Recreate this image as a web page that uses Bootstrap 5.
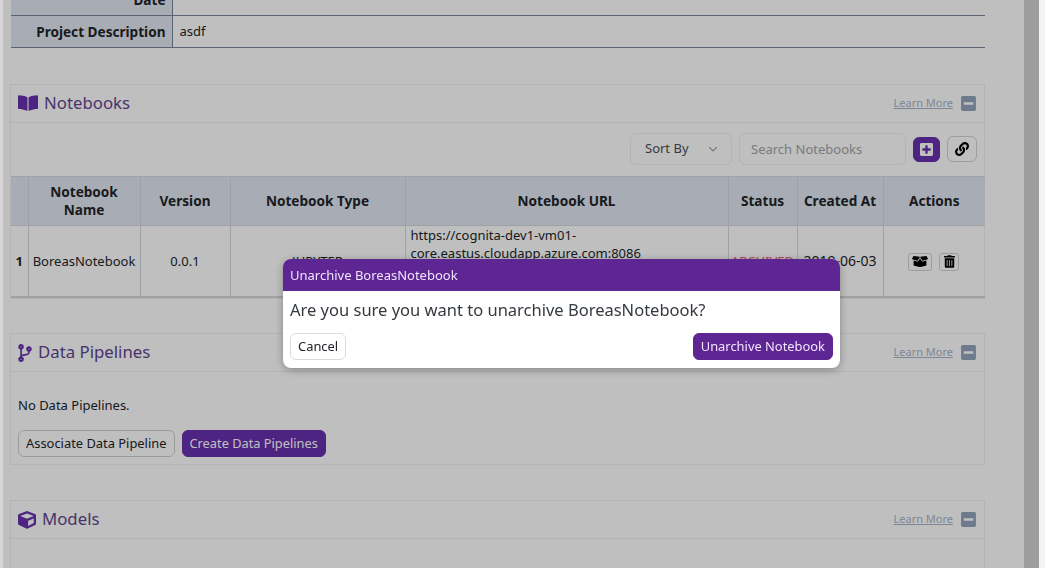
<!DOCTYPE html>
<html lang="en">
<head>
  <meta charset="UTF-8" />
  <meta name="viewport" content="width=device-width, initial-scale=1.0"/>
  <title>Project Details</title>
  <link href="https://cdn.jsdelivr.net/npm/bootstrap@5.3.3/dist/css/bootstrap.min.css" rel="stylesheet">
  <style>
    html, body { height: 100%; overflow: hidden; }
    body { font-family: "Noto Sans", "Open Sans", sans-serif; font-size: 13px; color: #212529; background: #fff; }
    .left-strip { width: 3px; flex: none; background: #d6d6d6; }
    .page-main { width: 1021px; flex: none; padding-left: 7px; }
    .side-dark { width: 15px; flex: none; background: #d2d2d2; }
    .side-light { width: 6px; flex: none; background: #f4f4f4; }
    .modal-backdrop.show { opacity: .25; left: 3px; width: 1036px; }

    .info-table { width: 974px; margin: -17px 0 36px 1px; border-collapse: collapse; }
    .info-table th { width: 161px; height: 32px; text-align: right; padding: 2px 6px 0; background: #e1e6f0; border-bottom: 1px solid #78849a; border-right: 1px solid #78849a; font-weight: 700; font-size: 13.6px; }
    .info-table td { padding: 2px 7px 0; border-bottom: 1px solid #78849a; }

    .sect-card { width: 975px; border: 1px solid #f0f0f0; border-radius: 0; margin-bottom: 35px; background: transparent; }
    .sect-card.sect-first { margin-bottom: 34px; }
    .sect-head { height: 38px; padding: 0 8px 0 7px; border-bottom: 1px solid #f0f0f0; }
    .sect-title { font-size: 16.8px; color: #5f4590; margin: 0; font-weight: 400; gap: 6px; }
    .sect-icon { height: 18px; fill: #6730ad; }
    .learn-link { font-size: 11px; color: #a7b4c7; }
    .collapse-icon { width: 15px; height: 17px; fill: #93a5bf; }

    .tool-row { height: 53px; padding: 0 7px 0 0; gap: 7px; }
    .sort-box { width: 102px; height: 32px; font-size: 13px; color: #495057; border-color: #f0f0f0; padding: 0 14px; background-color: transparent;
      background-image: url("data:image/svg+xml,%3csvg xmlns='http://www.w3.org/2000/svg' viewBox='0 0 16 16'%3e%3cpath fill='none' stroke='%23a0a0a0' stroke-width='2' d='m2 5 6 6 6-6'/%3e%3c/svg%3e");
      background-size: 10px 10px; background-position: right 13px center; }
    .search-box { width: 167px; height: 32px; font-size: 13px; padding: 0 11px; border-color: #f0f0f0; background-color: transparent; }
    .search-box::placeholder { color: #a0a4ab; }
    .btn-violet { background: #6730ad; border-color: #6730ad; color: #fff; font-size: 12.8px; }
    .btn-violet:hover { background: #6730ad; color: #fff; }
    .btn-plus { width: 27px; height: 25px; padding: 0; display: flex; align-items: center; justify-content: center; }
    .btn-plus svg { width: 13px; height: 15px; fill: #fff; }
    .btn-pale { width: 30px; height: 26px; padding: 0; display: flex; align-items: center; justify-content: center; border-color: #d2d2d2; }
    .btn-pale svg { width: 14px; height: 14px; }

    .note-table { width: 974px; table-layout: fixed; margin: 0; border-collapse: collapse; }
    .note-table th, .note-table td { border: 1px solid #d5d9dd; text-align: center; vertical-align: middle; padding: 0 2px; line-height: 18px; }
    .note-table th { height: 49px; background: #e1e6f0; font-weight: 700; font-size: 13.6px; }
    .note-table td { height: 72px; }
    .note-table tr:last-child td { border-bottom: 2px solid #d5d9dd; }
    .note-table tr > :first-child { border-left: 0; }
    .note-table tr > :last-child { border-right: 0; }
    .note-table td.url-cell { text-align: left; vertical-align: top; padding: 0 4px 0 5px; }
    .note-table td.date-cell { font-size: 14px; white-space: nowrap; }
    .note-table td.act-cell { padding-right: 3px; }
    .w-a { width: 17px; } .w-b { width: 112px; } .w-c { width: 90px; } .w-d { width: 175px; }
    .w-e { width: 323px; } .w-f { width: 69px; } .w-g { width: 86px; } .w-h { width: 102px; }
    .status-txt { color: #f0606f; white-space: nowrap; }
    .act-btn { height: 18px; padding: 0; border: 1px solid #d2d2d2; border-radius: 3px; display: inline-flex; align-items: center; justify-content: center; }
    .act-box { width: 24px; } .act-box svg { width: 16px; height: 13px; }
    .act-bin { width: 20px; margin-left: 7px; } .act-bin svg { width: 11px; height: 13px; }

    .pipe-body { padding: 24px 7px 7px; }
    .pipe-body p { margin: 0 0 15px; line-height: 19px; }
    .pipe-btns { gap: 7px; }
    .btn-line { border: 1px solid #cfcfcf; font-size: 12.9px; color: #212529; padding: 0 7px; height: 27px; line-height: 25px; background: transparent; }
    .pipe-body .btn-violet { padding: 0 7px; height: 27px; line-height: 25px; }
    .model-stub { height: 60px; }

    .modal-place { margin: 259px 0 0 283px; max-width: 557px; width: 557px; }
    .modal-place .modal-content { border: 0; border-radius: 8px; overflow: hidden; box-shadow: 0 2px 8px rgba(0,0,0,.3); }
    .modal-bar { height: 32px; background: #5e2693; color: #f1e4ff; padding: 0 7px; line-height: 32px; font-size: 13px; }
    .modal-msg { padding: 7px 7px 0; font-size: 16.5px; line-height: 24px; color: #343a40; height: 42px; }
    .modal-foot { padding: 0 7px 8px; }
    .modal-foot .btn { height: 27px; padding: 0 7px; line-height: 25px; font-size: 12.9px; }
    .btn-cancel { border: 1px solid #d8dbe0; color: #212529; background: #fff; }
    .modal-foot .btn-violet { background: #5e2693; border-color: #5e2693; color: #f1e4ff; }
  </style>
</head>
<body>

<svg class="d-none">
  <symbol id="i-book" viewBox="0 0 576 512"><path d="M542.22 32.05c-54.8 3.11-163.72 14.42-230.96 55.59-4.64 2.84-7.27 7.89-7.27 13.17v363.87c0 11.55 12.63 18.85 23.28 13.49 69.18-34.82 169.23-44.32 218.7-46.92 16.89-.89 30.02-14.43 30.02-30.66V62.75c.01-17.71-15.35-31.74-33.77-30.7zM264.73 87.64C197.5 46.47 88.58 35.17 33.78 32.05 15.36 31.01 0 45.04 0 62.75V400.6c0 16.24 13.13 29.78 30.02 30.66 49.49 2.6 149.59 12.11 218.77 46.95 10.62 5.35 23.21-1.94 23.21-13.46V100.63c0-5.29-2.62-10.14-7.27-12.99z"/></symbol>
  <symbol id="i-branch" viewBox="0 0 384 512"><path d="M384 144c0-44.2-35.8-80-80-80s-80 35.8-80 80c0 36.4 24.3 67.1 57.5 76.8-.6 16.1-4.2 28.5-11 36.9-15.4 19.2-49.3 22.4-85.2 25.7-28.2 2.6-57.4 5.4-81.3 16.9v-144c32.5-10.2 56-40.5 56-76.3 0-44.2-35.8-80-80-80S0 35.8 0 80c0 35.8 23.5 66.1 56 76.3v199.3C23.5 365.9 0 396.2 0 432c0 44.2 35.8 80 80 80s80-35.8 80-80c0-34-21.2-63.1-51.2-74.6 3.1-5.2 7.8-9.8 14.9-13.4 16.2-8.2 40.4-10.4 66.1-12.8 42.2-3.9 90-8.4 118.2-43.4 14-17.4 21.1-39.8 21.6-67.9 31.6-10.8 54.4-40.7 54.4-75.9zM80 64c8.8 0 16 7.2 16 16s-7.2 16-16 16-16-7.2-16-16 7.2-16 16-16zm0 384c-8.8 0-16-7.2-16-16s7.2-16 16-16 16 7.2 16 16-7.2 16-16 16zm224-320c8.8 0 16 7.2 16 16s-7.2 16-16 16-16-7.2-16-16 7.2-16 16-16z"/></symbol>
  <symbol id="i-cube" viewBox="0 0 512 512"><path d="M239.1 6.3l-208 78c-18.7 7-31.1 25-31.1 45v225.1c0 18.2 10.3 34.8 26.5 42.9l208 104c13.5 6.8 29.4 6.8 42.9 0l208-104c16.3-8.1 26.5-24.8 26.5-42.9V129.3c0-20-12.4-37.9-31.1-44.9l-208-78C262 2.2 250 2.2 239.1 6.3zM256 68.4l192 72v1.1l-192 78-192-78v-1.1l192-72zm32 356V275.5l160-65v133.9l-160 80z"/></symbol>
  <symbol id="i-minus" viewBox="0 0 448 512"><path d="M400 32H48C21.5 32 0 53.5 0 80v352c0 26.5 21.5 48 48 48h352c26.5 0 48-21.5 48-48V80c0-26.5-21.5-48-48-48zM92 296c-6.6 0-12-5.4-12-12v-56c0-6.6 5.4-12 12-12h264c6.6 0 12 5.4 12 12v56c0 6.6-5.4 12-12 12H92z"/></symbol>
  <symbol id="i-plus" viewBox="0 0 448 512"><path d="M400 32H48C21.5 32 0 53.5 0 80v352c0 26.5 21.5 48 48 48h352c26.5 0 48-21.5 48-48V80c0-26.5-21.5-48-48-48zm-32 252c0 6.6-5.4 12-12 12h-92v92c0 6.6-5.4 12-12 12h-56c-6.6 0-12-5.4-12-12v-92H92c-6.6 0-12-5.4-12-12v-56c0-6.6 5.4-12 12-12h92v-92c0-6.6 5.4-12 12-12h56c6.6 0 12 5.4 12 12v92h92c6.6 0 12 5.4 12 12v56z"/></symbol>
  <symbol id="i-link" viewBox="0 0 512 512"><path d="M326.612 185.391c59.747 59.809 58.927 155.698.36 214.59-.11.12-.24.25-.36.37l-67.2 67.2c-59.27 59.27-155.699 59.262-214.96 0-59.27-59.26-59.27-155.7 0-214.96l37.106-37.106c9.84-9.84 26.786-3.3 27.294 10.606.648 17.722 3.826 35.527 9.69 52.721 1.986 5.822.567 12.262-3.783 16.612l-13.087 13.087c-28.026 28.026-28.905 73.66-1.155 101.96 28.024 28.579 74.086 28.749 102.325.51l67.2-67.19c28.191-28.191 28.073-73.757 0-101.83-3.701-3.694-7.429-6.564-10.341-8.569a16.037 16.037 0 0 1-6.947-12.606c-.396-10.567 3.348-21.456 11.698-29.806l21.054-21.055c5.521-5.521 14.182-6.199 20.584-1.731a152.482 152.482 0 0 1 20.522 17.197zM467.547 44.449c-59.261-59.262-155.69-59.27-214.96 0l-67.2 67.2c-.12.12-.25.25-.36.37-58.566 58.892-59.387 154.781.36 214.59a152.454 152.454 0 0 0 20.521 17.196c6.402 4.468 15.064 3.789 20.584-1.731l21.054-21.055c8.35-8.35 12.094-19.239 11.698-29.806a16.037 16.037 0 0 0-6.947-12.606c-2.912-2.005-6.64-4.875-10.341-8.569-28.073-28.073-28.191-73.639 0-101.83l67.2-67.19c28.239-28.239 74.3-28.069 102.325.51 27.75 28.3 26.872 73.934-1.155 101.96l-13.087 13.087c-4.35 4.35-5.769 10.79-3.783 16.612 5.864 17.194 9.042 34.999 9.69 52.721.509 13.906 17.454 20.446 27.294 10.606l37.106-37.106c59.271-59.259 59.271-155.699.001-214.959z"/></symbol>
  <symbol id="i-box" viewBox="0 0 640 512"><path d="M425.7 256c-16.9 0-32.8-9-41.4-23.4L320 126l-64.2 106.6c-8.7 14.5-24.6 23.5-41.5 23.5-4.5 0-9-.6-13.3-1.9L64 215v178c0 14.7 10 27.5 24.2 31l216.2 54.1c10.2 2.5 20.9 2.5 31 0L551.8 424c14.2-3.6 24.2-16.4 24.2-31V215l-137 39.1c-4.3 1.3-8.8 1.9-13.3 1.9zm212.6-112.2L586.8 41c-3.1-6.2-9.8-9.8-16.7-8.9L320 64l91.7 152.1c3.8 6.3 11.4 9.3 18.5 7.3l197.9-56.5c9.9-2.9 14.7-13.9 10.2-23.1zM53.2 41L1.7 143.8c-4.6 9.2.3 20.2 10.1 23l197.9 56.5c7.1 2 14.7-1 18.5-7.3L320 64 69.8 32.1c-6.9-.8-13.5 2.7-16.6 8.9z"/></symbol>
  <symbol id="i-trash" viewBox="0 0 448 512"><path d="M32 464a48 48 0 0 0 48 48h288a48 48 0 0 0 48-48V128H32zm272-256a16 16 0 0 1 32 0v224a16 16 0 0 1-32 0zm-96 0a16 16 0 0 1 32 0v224a16 16 0 0 1-32 0zm-96 0a16 16 0 0 1 32 0v224a16 16 0 0 1-32 0zM432 32H312l-9.4-18.7A24 24 0 0 0 281.1 0H166.8a23.72 23.72 0 0 0-21.4 13.3L136 32H16A16 16 0 0 0 0 48v32a16 16 0 0 0 16 16h416a16 16 0 0 0 16-16V48a16 16 0 0 0-16-16z"/></symbol>
</svg>

<div class="d-flex vh-100">
  <div class="left-strip"></div>
  <main class="page-main">

    <table class="info-table">
      <tr><th>Date</th><td></td></tr>
      <tr><th>Project Description</th><td>asdf</td></tr>
    </table>

    <section class="card sect-card sect-first">
      <div class="sect-head d-flex align-items-center justify-content-between">
        <h5 class="sect-title d-flex align-items-center">
          <svg class="sect-icon" width="20" viewBox="0 0 20 18"><use href="#i-book"/></svg> Notebooks
        </h5>
        <div class="d-flex align-items-center gap-2">
          <a class="learn-link" href="#">Learn More</a>
          <svg class="collapse-icon"><use href="#i-minus"/></svg>
        </div>
      </div>
      <div class="tool-row d-flex align-items-center justify-content-end">
        <select class="form-select sort-box"><option>Sort By</option></select>
        <input class="form-control search-box" placeholder="Search Notebooks">
        <button class="btn btn-violet btn-plus"><svg><use href="#i-plus"/></svg></button>
        <button class="btn btn-pale"><svg><use href="#i-link"/></svg></button>
      </div>
      <table class="note-table">
        <colgroup>
          <col class="w-a"><col class="w-b"><col class="w-c"><col class="w-d">
          <col class="w-e"><col class="w-f"><col class="w-g"><col class="w-h">
        </colgroup>
        <thead>
          <tr>
            <th></th><th>Notebook Name</th><th>Version</th><th>Notebook Type</th>
            <th>Notebook URL</th><th>Status</th><th>Created At</th><th>Actions</th>
          </tr>
        </thead>
        <tbody>
          <tr>
            <td class="fw-bold">1</td>
            <td>BoreasNotebook</td>
            <td>0.0.1</td>
            <td>JUPYTER</td>
            <td class="url-cell">https://cognita-dev1-vm01-<br>core.eastus.cloudapp.azure.com:8086</td>
            <td class="status-txt">ARCHIVED</td>
            <td class="date-cell">2019-06-03</td>
            <td class="act-cell">
              <button class="btn act-btn act-box"><svg><use href="#i-box"/></svg></button><button class="btn act-btn act-bin"><svg><use href="#i-trash"/></svg></button>
            </td>
          </tr>
        </tbody>
      </table>
    </section>

    <section class="card sect-card">
      <div class="sect-head d-flex align-items-center justify-content-between">
        <h5 class="sect-title d-flex align-items-center">
          <svg class="sect-icon" width="14" viewBox="0 0 14 18"><use href="#i-branch"/></svg> Data Pipelines
        </h5>
        <div class="d-flex align-items-center gap-2">
          <a class="learn-link" href="#">Learn More</a>
          <svg class="collapse-icon"><use href="#i-minus"/></svg>
        </div>
      </div>
      <div class="pipe-body">
        <p>No Data Pipelines.</p>
        <div class="d-flex pipe-btns">
          <button class="btn btn-line">Associate Data Pipeline</button>
          <button class="btn btn-violet">Create Data Pipelines</button>
        </div>
      </div>
    </section>

    <section class="card sect-card">
      <div class="sect-head d-flex align-items-center justify-content-between">
        <h5 class="sect-title d-flex align-items-center">
          <svg class="sect-icon" width="18" viewBox="0 0 18 18"><use href="#i-cube"/></svg> Models
        </h5>
        <div class="d-flex align-items-center gap-2">
          <a class="learn-link" href="#">Learn More</a>
          <svg class="collapse-icon"><use href="#i-minus"/></svg>
        </div>
      </div>
      <div class="model-stub"></div>
    </section>

  </main>
  <div class="side-dark"></div>
  <div class="side-light"></div>
</div>

<div class="modal-backdrop fade show"></div>
<div class="modal fade show d-block" tabindex="-1">
  <div class="modal-dialog modal-place">
    <div class="modal-content">
      <div class="modal-bar">Unarchive BoreasNotebook</div>
      <div class="modal-msg">Are you sure you want to unarchive BoreasNotebook?</div>
      <div class="modal-foot d-flex justify-content-between">
        <button class="btn btn-cancel">Cancel</button>
        <button class="btn btn-violet">Unarchive Notebook</button>
      </div>
    </div>
  </div>
</div>

<script src="https://cdn.jsdelivr.net/npm/bootstrap@5.3.3/dist/js/bootstrap.bundle.min.js"></script>
</body>
</html>
